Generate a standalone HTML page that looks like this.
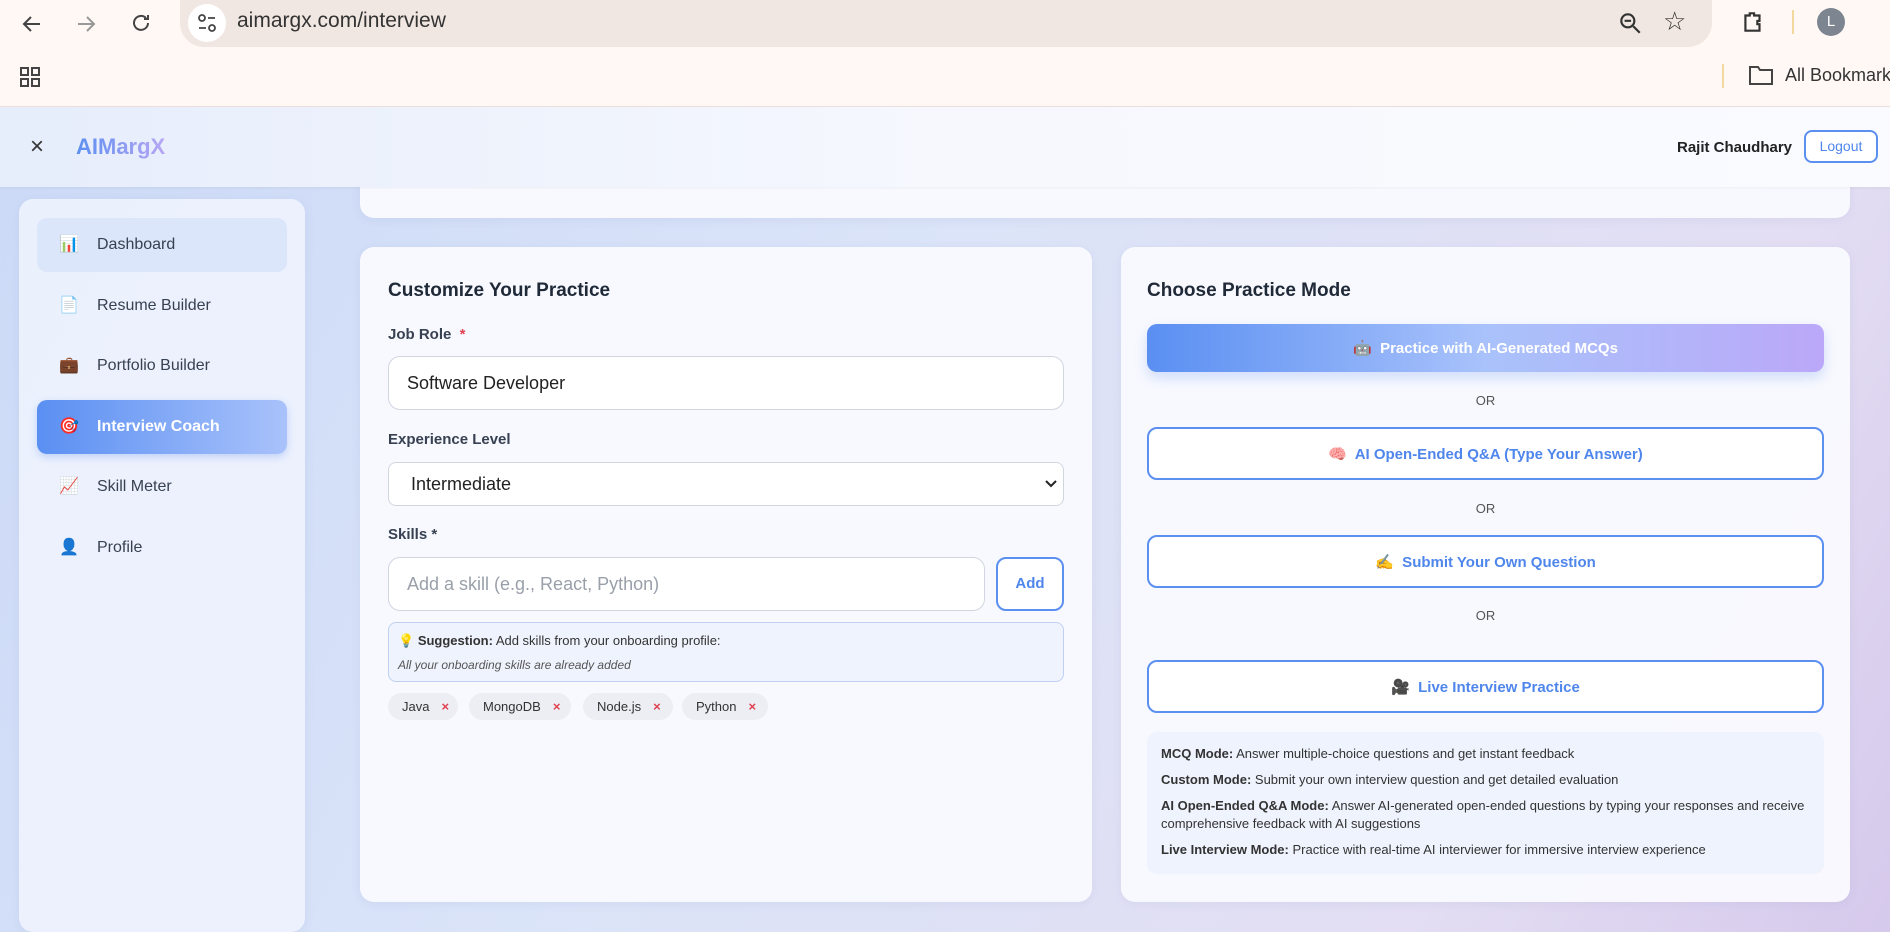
<!DOCTYPE html>
<html><head><meta charset="utf-8"><style>
*{box-sizing:border-box;margin:0;padding:0}
body{width:1890px;height:932px;overflow:hidden;position:relative;font-family:"Liberation Sans",sans-serif;background:linear-gradient(120deg,#cbd9f7 0%,#dbe4f8 45%,#e3def3 80%,#d6c9ec 100%)}
.a{position:absolute}
.chrome{left:0;top:0;width:1890px;height:107px;background:#fff8f5;border-bottom:1px solid #eee0da}
.url{left:180px;top:0;width:1532px;height:47px;background:#f1e7e2;border-radius:0 0 24px 24px}
.hdr{left:0;top:107px;width:1890px;height:80px;background:linear-gradient(90deg,#e6edfb,#f6f8fe 50%,#fafbff);box-shadow:0 1px 3px rgba(0,0,0,.05);z-index:2}
.card{background:rgba(250,251,255,.93);border-radius:14px;box-shadow:0 2px 10px rgba(80,100,160,.08)}
.side{left:19px;top:199px;width:286px;height:733px;background:rgba(238,242,253,.92);border-radius:14px}
.it{position:absolute;left:18px;width:250px;height:54px;border-radius:10px;font-size:16px;color:#374151;display:flex;align-items:center;padding-left:60px}
.it i{position:absolute;left:22px;top:17px;width:19px;height:19px;font-style:normal;font-size:16px;line-height:19px}
h2{font-size:19px;font-weight:600;color:#1f2937;position:absolute}
.lbl{font-size:15px;font-weight:600;color:#374151;position:absolute}
.inp{position:absolute;background:#fff;border:1px solid #d1d5e0;border-radius:12px;font-size:18px;color:#222;display:flex;align-items:center;padding-left:18px}
.btn{position:absolute;left:1147px;width:677px;border-radius:10px;display:flex;align-items:center;justify-content:center;font-size:15px;font-weight:600}
.ob{border:2px solid #5b8ff0;background:#fff;color:#4f86ec}
.or{position:absolute;left:1147px;width:677px;text-align:center;font-size:13px;color:#555}
.tag{position:absolute;top:693px;height:27px;background:#eceef4;border-radius:14px;font-size:13px;color:#333;display:flex;align-items:center;padding-left:14px}
.tag b{color:#e04050;margin-left:12px;font-size:13px}
.info p{font-size:13px;color:#333;line-height:18px;margin-bottom:8px}
</style></head><body>
<div class="a chrome"></div>
<div class="a url"></div>
<svg class="a" style="left:20px;top:12px" width="24" height="24" viewBox="0 0 24 24" fill="none" stroke="#444" stroke-width="2"><path d="M20 12H5M11 5l-7 7 7 7"/></svg>
<svg class="a" style="left:74px;top:12px" width="24" height="24" viewBox="0 0 24 24" fill="none" stroke="#999" stroke-width="2"><path d="M4 12h15M13 5l7 7-7 7"/></svg>
<svg class="a" style="left:129px;top:11px" width="24" height="24" viewBox="0 0 24 24" fill="none" stroke="#444" stroke-width="2"><path d="M19 12a7 7 0 1 1-2-5M19 4v4h-4"/></svg>
<div class="a" style="left:188px;top:4px;width:38px;height:38px;border-radius:19px;background:#fff"></div>
<svg class="a" style="left:196px;top:12px" width="22" height="22" viewBox="0 0 22 22" fill="none" stroke="#444" stroke-width="1.8"><circle cx="6" cy="6" r="3"/><path d="M12 6h7M3 16h7"/><circle cx="16" cy="16" r="3"/></svg>
<div class="a" style="left:237px;top:9px;font-size:21px;color:#333">aimargx.com/interview</div>
<svg class="a" style="left:1617px;top:10px" width="26" height="26" viewBox="0 0 24 24" fill="none" stroke="#333" stroke-width="2"><circle cx="10" cy="10" r="6"/><path d="M15 15l6 6M7 10h6"/></svg>
<div class="a" style="left:1663px;top:6px;font-size:26px;color:#333">☆</div>
<svg class="a" style="left:1740px;top:9px" width="26" height="26" viewBox="0 0 24 24" fill="none" stroke="#333" stroke-width="2"><path d="M5 6h4V4h4v2h5v5h-2v3h2v6H5z"/></svg>
<div class="a" style="left:1792px;top:10px;width:2px;height:24px;background:#f2d9a0"></div>
<div class="a" style="left:1817px;top:8px;width:28px;height:28px;border-radius:14px;background:#7d8591;color:#fff;font-size:15px;text-align:center;line-height:28px">L</div>
<svg class="a" style="left:19px;top:66px" width="22" height="22" viewBox="0 0 22 22" fill="none" stroke="#444" stroke-width="2"><rect x="2" y="2" width="7" height="7"/><rect x="13" y="2" width="7" height="7"/><rect x="2" y="13" width="7" height="7"/><rect x="13" y="13" width="7" height="7"/></svg>
<div class="a" style="left:1722px;top:64px;width:2px;height:24px;background:#f2d9a0"></div>
<svg class="a" style="left:1748px;top:64px" width="26" height="22" viewBox="0 0 26 22" fill="none" stroke="#444" stroke-width="2"><path d="M2 3h8l2 3h12v14H2z"/></svg>
<div class="a" style="left:1785px;top:65px;font-size:18px;color:#333;white-space:nowrap">All Bookmarks</div>

<div class="a card" style="left:360px;top:150px;width:1490px;height:68px"></div>
<div class="a hdr"></div>
<div class="a" style="left:30px;top:133px;font-size:24px;color:#333;z-index:3">×</div>
<div class="a" style="left:76px;top:134px;font-size:22px;font-weight:bold;background:linear-gradient(90deg,#5b8ff0,#b7a6f5);-webkit-background-clip:text;color:transparent;z-index:3">AIMargX</div>
<div class="a" style="left:1677px;top:139px;font-size:15px;font-weight:600;color:#222;z-index:3">Rajit Chaudhary</div>
<div class="a" style="left:1804px;top:130px;width:74px;height:33px;border:2px solid #5b8ff0;border-radius:8px;background:#fff;color:#4f86ec;font-size:14px;text-align:center;line-height:29px;z-index:3">Logout</div>

<div class="a side card">
<div class="it" style="top:19px;background:#dce6fb"><i>📊</i>Dashboard</div>
<div class="it" style="top:80px"><i>📄</i>Resume Builder</div>
<div class="it" style="top:140px"><i>💼</i>Portfolio Builder</div>
<div class="it" style="top:201px;background:linear-gradient(90deg,#5a8ff2,#a9c2fb);color:#fff;font-weight:600;box-shadow:0 3px 8px rgba(90,140,240,.3)"><i>🎯</i>Interview Coach</div>
<div class="it" style="top:261px"><i>📈</i>Skill Meter</div>
<div class="it" style="top:322px"><i>👤</i>Profile</div>
</div>

<div class="a card" style="left:360px;top:247px;width:732px;height:655px"></div>
<h2 style="left:388px;top:280px">Customize Your Practice</h2>
<div class="lbl" style="left:388px;top:326px">Job Role <span style="color:#e04050">&nbsp;*</span></div>
<div class="inp" style="left:388px;top:356px;width:676px;height:54px">Software Developer</div>
<div class="lbl" style="left:388px;top:431px">Experience Level</div>
<div class="inp" style="left:388px;top:462px;width:676px;height:44px;border-radius:8px;padding-left:22px">Intermediate</div>
<svg class="a" style="left:1044px;top:478px" width="14" height="12" viewBox="0 0 14 12" fill="none" stroke="#222" stroke-width="2"><path d="M2 3l5 5 5-5"/></svg>
<div class="lbl" style="left:388px;top:526px">Skills *</div>
<div class="inp" style="left:388px;top:557px;width:597px;height:54px;color:#9aa0aa">Add a skill (e.g., React, Python)</div>
<div class="a" style="left:996px;top:557px;width:68px;height:54px;border:2px solid #5b8ff0;border-radius:10px;background:#fff;color:#4f86ec;font-weight:600;font-size:15px;text-align:center;line-height:50px">Add</div>
<div class="a" style="left:388px;top:622px;width:676px;height:60px;background:#eef3fd;border:1px solid #bfd0f2;border-radius:8px"></div>
<div class="a" style="left:398px;top:633px;font-size:13px;color:#333">💡 <b>Suggestion:</b> Add skills from your onboarding profile:</div>
<div class="a" style="left:398px;top:658px;font-size:12px;color:#555;font-style:italic">All your onboarding skills are already added</div>
<div class="tag" style="left:388px;width:70px">Java<b>×</b></div>
<div class="tag" style="left:469px;width:102px">MongoDB<b>×</b></div>
<div class="tag" style="left:583px;width:90px">Node.js<b>×</b></div>
<div class="tag" style="left:682px;width:86px">Python<b>×</b></div>

<div class="a card" style="left:1121px;top:247px;width:729px;height:655px"></div>
<h2 style="left:1147px;top:280px">Choose Practice Mode</h2>
<div class="btn" style="top:324px;height:48px;color:#fff;background:linear-gradient(90deg,#5a8ff2,#a9c2fb 50%,#bba8f8);box-shadow:0 6px 12px rgba(90,140,240,.25)">🤖&nbsp; Practice with AI-Generated MCQs</div>
<div class="or" style="top:393px">OR</div>
<div class="btn ob" style="top:427px;height:53px">🧠&nbsp; AI Open-Ended Q&amp;A (Type Your Answer)</div>
<div class="or" style="top:501px">OR</div>
<div class="btn ob" style="top:535px;height:53px">✍️&nbsp; Submit Your Own Question</div>
<div class="or" style="top:608px">OR</div>
<div class="btn ob" style="top:660px;height:53px">🎥&nbsp; Live Interview Practice</div>
<div class="a info" style="left:1147px;top:732px;width:677px;height:142px;background:#eef3fd;border-radius:10px;padding:13px 14px">
<p><b>MCQ Mode:</b> Answer multiple-choice questions and get instant feedback</p>
<p><b>Custom Mode:</b> Submit your own interview question and get detailed evaluation</p>
<p><b>AI Open-Ended Q&amp;A Mode:</b> Answer AI-generated open-ended questions by typing your responses and receive comprehensive feedback with AI suggestions</p>
<p><b>Live Interview Mode:</b> Practice with real-time AI interviewer for immersive interview experience</p>
</div>
</body></html>
